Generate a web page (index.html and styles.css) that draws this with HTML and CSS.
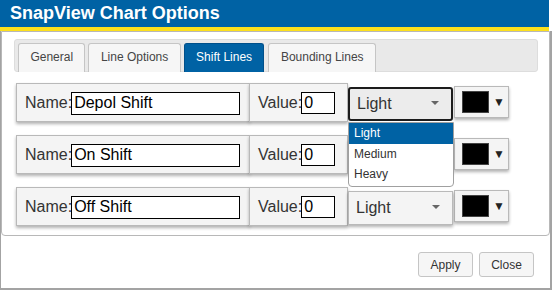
FILE: index.html
```html
<!DOCTYPE html>
<html>
<head>
<meta charset="utf-8">
<link rel="stylesheet" href="styles.css">
</head>
<body>
<div class="dialog">
  <div class="titlebar">SnapView Chart Options</div>
  <div class="content">
    <div class="panel">
      <ul class="nav">
        <li class="tab">General</li>
        <li class="tab">Line Options</li>
        <li class="tab active">Shift Lines</li>
        <li class="tab">Bounding Lines</li>
      </ul>
      <div class="rows">
        <div class="row">
          <div class="group name"><label>Name:</label><input type="text" value="Depol Shift"></div>
          <div class="group value"><label>Value:</label><input type="text" value="0"></div>
          <div class="select focused"><span>Light</span><span class="caret"></span>
            <ul class="menu">
              <li class="opt selected">Light</li>
              <li class="opt">Medium</li>
              <li class="opt">Heavy</li>
            </ul>
          </div>
          <div class="color"><span class="swatch"></span><span class="arrow">▼</span></div>
        </div>
        <div class="row">
          <div class="group name"><label>Name:</label><input type="text" value="On Shift"></div>
          <div class="group value"><label>Value:</label><input type="text" value="0"></div>
          <div class="select"><span>Light</span><span class="caret"></span></div>
          <div class="color"><span class="swatch"></span><span class="arrow">▼</span></div>
        </div>
        <div class="row">
          <div class="group name"><label>Name:</label><input type="text" value="Off Shift"></div>
          <div class="group value"><label>Value:</label><input type="text" value="0"></div>
          <div class="select"><span>Light</span><span class="caret"></span></div>
          <div class="color"><span class="swatch"></span><span class="arrow">▼</span></div>
        </div>
      </div>
    </div>
    <div class="buttons">
      <button class="btn">Apply</button>
      <button class="btn">Close</button>
    </div>
  </div>
</div>
</body>
</html>
```
FILE: styles.css
```css
* { box-sizing: border-box; }
html, body { margin: 0; padding: 0; background: #fff; }
body { font-family: "Liberation Sans", Arial, sans-serif; }

.dialog { width: 552px; height: 290px; display: flex; flex-direction: column; }

.titlebar {
  height: 31px;
  margin-right: 3px;
  background: #0062a4;
  border-bottom: 4px solid #fde01c;
  color: #fff;
  font-weight: bold;
  font-size: 18px;
  line-height: 27px;
  padding-left: 10px;
}

.content {
  flex: 1;
  border: solid #a3a3a3;
  border-width: 0 2px 2px 1px;
  display: flex;
  flex-direction: column;
}

.panel {
  height: 205px;
  border: 1px solid #b8b8b8;
  border-radius: 0 0 4px 4px;
  padding: 7px 11px 0 12px;
}

.nav {
  list-style: none;
  margin: 0;
  height: 33px;
  padding: 3px 3px 0 3px;
  background: #e9e9e9;
  border: 1px solid #dddddd;
  border-radius: 3px;
  display: flex;
  gap: 3px;
}

.tab {
  height: 29px;
  line-height: 27px;
  padding: 0 11.4px;
  font-size: 12px;
  color: #454545;
  background: #f6f6f6;
  border: 1px solid #c5c5c5;
  border-bottom: none;
  border-radius: 3px 3px 0 0;
}
.tab:nth-child(4) { margin-left: 1px; }
.tab.active { background: #0062a4; border-color: #00508a; color: #fff; }

.rows {
  margin-top: 11px;
  padding-left: 2px;
  display: flex;
  flex-direction: column;
  gap: 13px;
}

.row { display: flex; align-items: flex-start; height: 39px; }

.group, .select, .color {
  background: #f4f4f4;
  border: 1px solid #b9b9b9;
  box-shadow: 0 2px 3px rgba(0, 0, 0, 0.3);
}

.group {
  height: 39px;
  display: flex;
  align-items: center;
  padding-left: 8px;
  font-size: 16px;
  color: #333;
}
.group label { white-space: nowrap; }
.group input {
  font-family: "Liberation Sans", Arial, sans-serif;
  font-size: 16px;
  color: #000;
  border: 1px solid #000;
  background: #fff;
  height: 23px;
  padding: 0 2px;
  margin: 1px 0 0 0;
  outline: none;
}
.group.name { width: 234px; }
.group.name input { width: 169px; margin-left: -1px; }
.group.value { width: 99px; margin-left: -1px; }
.group.value input { width: 34px; height: 22px; margin-left: -1px; }

.select {
  position: relative;
  margin-top: 4px;
  width: 105px;
  height: 34px;
  display: flex;
  align-items: center;
  justify-content: space-between;
  padding: 0 12px 0 7px;
  font-size: 16px;
  color: #333;
}
.select.focused {
  border: 2px solid #1c1c1c;
  border-radius: 3px;
  background: #ececec;
  box-shadow: none;
  padding-left: 7px;
}
.caret {
  width: 0; height: 0;
  border-left: 4px solid transparent;
  border-right: 4px solid transparent;
  border-top: 4px solid #666;
  margin-top: -2px;
}

.menu {
  position: absolute;
  left: -2px;
  top: 33px;
  width: 106px;
  margin: 0;
  padding: 0;
  list-style: none;
  background: #fff;
  border: 1px solid #a0a0a0;
  border-radius: 0 0 4px 4px;
  z-index: 5;
  padding-bottom: 2px;
}
.opt {
  height: 20px;
  line-height: 20px;
  padding-left: 5px;
  font-size: 12px;
  color: #333;
}
.opt.selected { background: #0062a4; color: #fff; height: 21px; line-height: 21px; }

.color {
  margin-top: 3px;
  margin-left: 1px;
  width: 55px;
  height: 32px;
  display: flex;
  align-items: center;
  padding-left: 7px;
}
.swatch {
  width: 27px;
  height: 22px;
  background: #000;
  border: 1px solid #444;
}
.arrow { font-size: 12px; color: #222; margin-left: 4px; }

.buttons {
  display: flex;
  justify-content: flex-end;
  gap: 6px;
  padding: 16px 16px 0 0;
}
.btn {
  width: 55px;
  height: 25px;
  font-family: "Liberation Sans", Arial, sans-serif;
  font-size: 12px;
  color: #333;
  background: #f6f6f6;
  border: 1px solid #c5c5c5;
  border-radius: 3px;
  padding: 0;
}
```
